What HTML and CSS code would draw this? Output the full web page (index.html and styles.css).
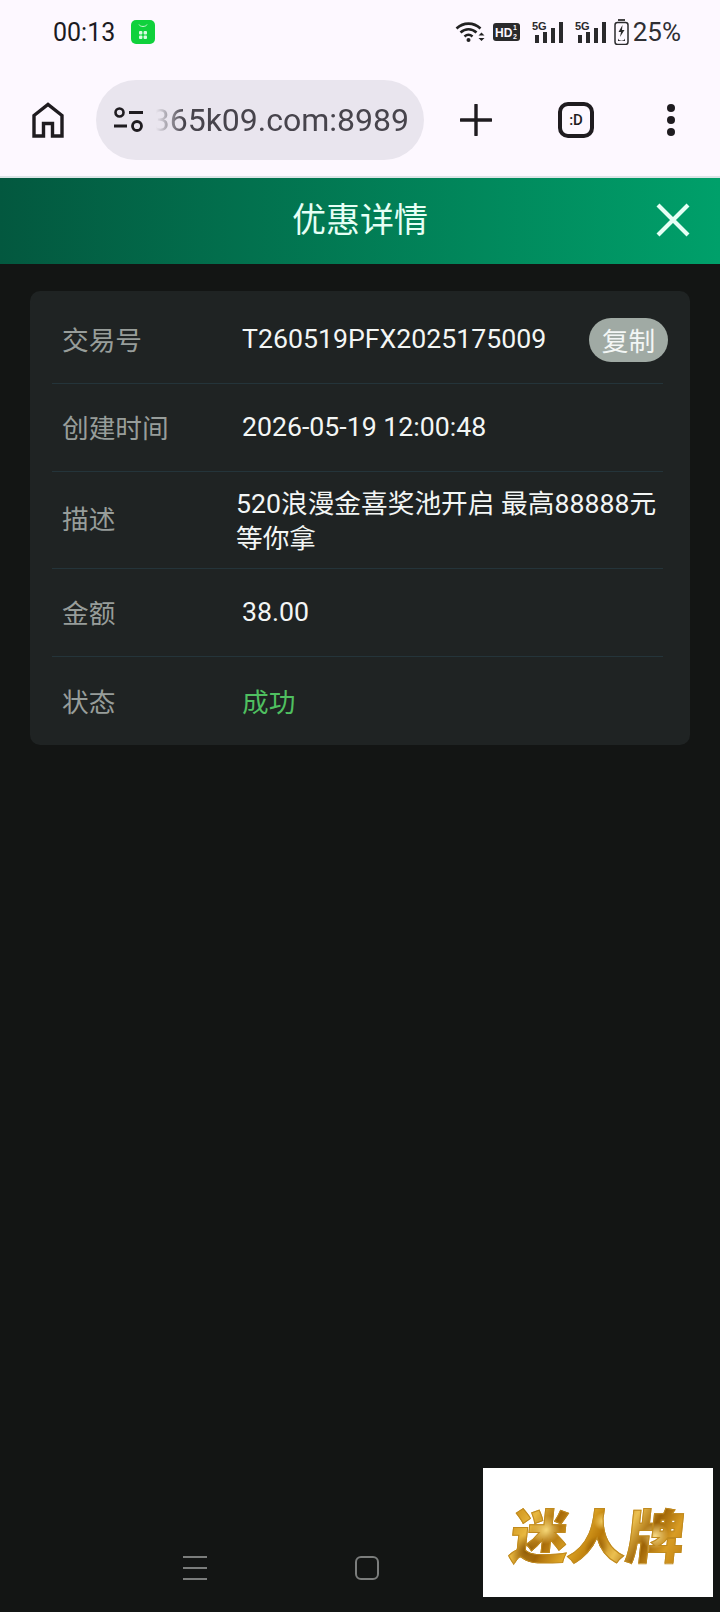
FILE: index.html
```html
<!DOCTYPE html>
<html lang="zh-CN">
<head>
  <meta charset="UTF-8" />
  <title>优惠详情</title>
  <link rel="stylesheet" href="styles.css">
</head>
<body>
  <div class="page">
    <div class="statusbar">
      <div class="status-left">
        <span class="clock">00:13</span>
        <svg class="app-icon" width="24" height="24" viewBox="0 0 24 24">
          <rect width="24" height="24" rx="5" fill="#10d13c"/>
          <path d="M8 4.500c1 2.600 7 2.600 8 0" fill="none" stroke="#c9f7d2" stroke-width="1"/>
          <rect x="8" y="11" width="3.400" height="3.400" rx="1" fill="#d9fbe0"/>
          <rect x="12.600" y="11" width="3.400" height="3.400" rx="1" fill="#d9fbe0"/>
          <rect x="8" y="15.600" width="3.400" height="3.400" rx="1" fill="#d9fbe0"/>
          <rect x="12.600" y="15.600" width="3.400" height="3.400" rx="1" fill="#d9fbe0"/>
        </svg>
      </div>
      <div class="status-right">
        <svg class="wifi" width="30" height="24" viewBox="0 0 30 24">
          <path d="M1.500 8.500c7-6.500 17-6.500 24 0M5.500 12.500c4.800-4.300 11.200-4.300 16 0M9.500 16.500c2.500-2.200 5.500-2.200 8 0" fill="none" stroke="#222" stroke-width="2.600"/>
          <circle cx="13.500" cy="20" r="2" fill="#222"/>
          <path d="M23.500 15.500h6l-3-3zM23.500 18h6l-3 3z" fill="#222"/>
        </svg>
        <svg width="28" height="20" viewBox="0 0 28 20">
          <rect width="27" height="18" y="1" rx="3" fill="#2a2a2c"/>
          <text class="hd-text" x="2" y="15">HD</text>
          <text class="hd-frac" x="20" y="8">1</text>
          <text class="hd-frac" x="20" y="17">2</text>
        </svg>
        <svg class="sim" width="32" height="24" viewBox="0 0 32 24">
          <text class="sim-text" x="0" y="10">5G</text>
          <rect x="3" y="15" width="4" height="8" fill="#2a2a2c"/>
          <rect x="11" y="12" width="4" height="11" fill="#2a2a2c"/>
          <rect x="19" y="8" width="4" height="15" fill="#2a2a2c"/>
          <rect x="27" y="2" width="4" height="21" fill="#2a2a2c"/>
        </svg>
        <svg class="sim" width="32" height="24" viewBox="0 0 32 24">
          <text class="sim-text" x="0" y="10">5G</text>
          <rect x="3" y="15" width="4" height="8" fill="#2a2a2c"/>
          <rect x="11" y="12" width="4" height="11" fill="#2a2a2c"/>
          <rect x="19" y="8" width="4" height="15" fill="#2a2a2c"/>
          <rect x="27" y="2" width="4" height="21" fill="#2a2a2c"/>
        </svg>
        <svg class="battery" width="15" height="26" viewBox="0 0 15 26">
          <rect x="4" y="0" width="7" height="2" fill="#444"/>
          <rect x="1" y="3.500" width="13" height="22" rx="2.500" fill="none" stroke="#2a2a2c" stroke-width="1.500"/>
          <path d="M8.500 6l-4 7h2.500l-1 5 4.500-7H8z" fill="#2a2a2c"/>
          <path d="M4 19.500c1 3 6 3 7 0v2.500H4z" fill="#2a2a2c"/>
        </svg>
        <span class="battery-text">25%</span>
      </div>
    </div>

    <div class="toolbar">
      <svg class="home-icon" width="32" height="36" viewBox="0 0 32 36">
        <path d="M2 34V13.500L16 2.500l14 11V34H20.500V21.500h-9V34z" fill="none" stroke="#1f1c20" stroke-width="3.400"/>
      </svg>
      <div class="urlbar">
        <svg width="32" height="26" viewBox="0 0 32 26">
          <circle cx="6.500" cy="5.500" r="4" fill="none" stroke="#1f1c20" stroke-width="2.600"/>
          <path d="M16 5.500h14M1 19h13" stroke="#1f1c20" stroke-width="2.800"/>
          <circle cx="24" cy="19" r="4.500" fill="none" stroke="#1f1c20" stroke-width="2.800"/>
        </svg>
        <div class="url-clip"><span class="url-text">365k09.com:8989</span></div>
      </div>
      <svg class="plus-icon" width="32" height="32" viewBox="0 0 32 32">
        <path d="M16 1v30M1 16h30" stroke="#1f1c20" stroke-width="3.400" stroke-linecap="round"/>
      </svg>
      <div class="tab-count">:D</div>
      <div class="menu-dots"><i></i><i></i><i></i></div>
    </div>

    <div class="topbar">
      <h1 class="topbar-title">优惠详情</h1>
      <svg class="close-icon" width="34" height="34" viewBox="0 0 34 34">
        <path d="M2 2l30 30M32 2L2 32" stroke="#e6fff5" stroke-width="4.200"/>
      </svg>
    </div>

    <div class="content">
      <div class="card">
        <div class="row">
          <span class="label">交易号</span>
          <span class="value">T260519PFX2025175009</span>
          <button class="copy-btn">复制</button>
        </div>
        <div class="row">
          <span class="label">创建时间</span>
          <span class="value">2026-05-19 12:00:48</span>
        </div>
        <div class="row row-tall">
          <span class="label">描述</span>
          <span class="value value-desc">520浪漫金喜奖池开启 最高88888元等你拿</span>
        </div>
        <div class="row">
          <span class="label">金额</span>
          <span class="value">38.00</span>
        </div>
        <div class="row">
          <span class="label">状态</span>
          <span class="value success">成功</span>
        </div>
      </div>
    </div>

    <div class="navbar">
      <div class="nav-menu"><i></i><i></i><i></i></div>
      <div class="nav-home"></div>
    </div>

    <div class="logo-box"><span class="logo-text">迷人牌</span></div>
  </div>
</body>
</html>
```

FILE: styles.css
```css
* {
  box-sizing: border-box;
}

body {
  margin: 0;
  background: #131514;
  font-family: Roboto, "Noto Sans CJK SC", sans-serif;
}

.page {
  position: relative;
  width: 720px;
  height: 1612px;
  display: flex;
  flex-direction: column;
  overflow: hidden;
}

/* status bar */
.statusbar {
  height: 64px;
  padding: 0 39px 0 53px;
  background: #fdf8ff;
  display: flex;
  justify-content: space-between;
  align-items: center;
}

.status-left {
  display: flex;
  align-items: center;
  gap: 16px;
}

.clock {
  font-size: 25px;
  color: #1c1b1f;
}

.app-icon {
  display: block;
}

.status-right {
  display: flex;
  align-items: center;
  gap: 10px;
  color: #2a2a2c;
}

.wifi {
  margin-right: -2px;
}

.sim {
  margin-left: 1px;
}

.battery {
  margin-left: -3px;
  margin-right: -6px;
}

.battery-text {
  font-size: 26px;
  color: #2f2f33;
}

.hd-text {
  font: bold 12px "Liberation Sans", sans-serif;
  fill: #fdf8ff;
}

.hd-frac {
  font: bold 7px "Liberation Sans", sans-serif;
  fill: #fdf8ff;
}

.sim-text {
  font: bold 11px "Liberation Sans", sans-serif;
  fill: #2a2a2c;
}

/* browser toolbar */
.toolbar {
  height: 114px;
  padding: 18px 0 18px 32px;
  background: #fdf8ff;
  border-bottom: 2px solid #dbe4e6;
  display: flex;
  align-items: center;
}

.home-icon {
  flex: none;
}

.urlbar {
  width: 328px;
  height: 80px;
  margin-left: 32px;
  padding: 0 15px 0 17px;
  background: #e9e5ee;
  border-radius: 40px;
  display: flex;
  align-items: center;
  gap: 11px;
}

.urlbar svg {
  flex: none;
}

.url-clip {
  flex: 1;
  min-width: 0;
  overflow: hidden;
  display: flex;
  justify-content: flex-end;
  white-space: nowrap;
  -webkit-mask-image: linear-gradient(90deg, transparent 0, #000 28px);
  mask-image: linear-gradient(90deg, transparent 0, #000 28px);
}

.url-text {
  flex: none;
  font-size: 32px;
  color: #47444c;
}

.plus-icon {
  flex: none;
  margin-left: 36px;
}

.tab-count {
  width: 36px;
  height: 36px;
  margin-left: 66px;
  border: 4px solid #1f1c20;
  border-radius: 10px;
  font-size: 15px;
  font-weight: 500;
  color: #1f1c20;
  display: flex;
  align-items: center;
  justify-content: center;
}

.menu-dots {
  margin-left: 73px;
  display: flex;
  flex-direction: column;
  gap: 4px;
}

.menu-dots i {
  display: block;
  width: 8px;
  height: 8px;
  border-radius: 50%;
  background: #1f1c20;
}

/* green header */
.topbar {
  position: relative;
  height: 86px;
  padding-bottom: 8px;
  background: linear-gradient(90deg, #03583f, #00a06a);
  display: flex;
  align-items: center;
  justify-content: center;
}

.topbar-title {
  margin: 0;
  font-size: 34px;
  font-weight: 400;
  color: #e6fff5;
}

.close-icon {
  position: absolute;
  right: 30px;
  top: 25px;
}

/* detail card */
.content {
  flex: 1;
  padding: 27px 30px 0;
}

.card {
  padding: 5px 27px 0 22px;
  background: #1f2323;
  border-radius: 10px;
}

.row {
  height: 88px;
  padding-left: 10px;
  padding-bottom: 2px;
  border-bottom: 1px solid #24343a;
  display: flex;
  align-items: center;
  font-size: 26.7px;
}

.row-tall {
  height: 97px;
  padding-bottom: 6px;
}

.row:last-child {
  border-bottom: 0;
}

.label {
  flex: none;
  width: 180px;
  color: #979d9a;
}

.value {
  flex: 1;
  color: #f3f6f5;
}

.value-desc {
  margin-left: -6px;
  padding-top: 10px;
  line-height: 35px;
  word-break: break-all;
}

.success {
  color: #4fc060;
}

.copy-btn {
  flex: none;
  width: 79px;
  height: 44px;
  margin-top: 2px;
  margin-right: -5px;
  padding: 0;
  border: none;
  border-radius: 22px;
  background: #a0aaa4;
  color: #f3f6f5;
  font: inherit;
}

/* system navigation */
.navbar {
  height: 110px;
  padding: 54px 0 0 183px;
  display: flex;
  align-items: flex-start;
  gap: 148px;
}

.nav-menu {
  width: 24px;
  height: 24px;
  display: flex;
  flex-direction: column;
  justify-content: space-between;
}

.nav-menu i {
  display: block;
  height: 2px;
  background: #7b7d7c;
}

.nav-home {
  width: 24px;
  height: 24px;
  border: 2px solid #7b7d7c;
  border-radius: 6px;
}

/* floating ad */
.logo-box {
  position: absolute;
  left: 483px;
  top: 1468px;
  width: 230px;
  height: 129px;
  background: #fff;
  display: flex;
  align-items: center;
  justify-content: center;
}

.logo-text {
  display: block;
  font-family: "Noto Sans CJK SC", sans-serif;
  font-size: 58px;
  line-height: 60px;
  font-weight: 900;
  transform: skewX(-6deg);
  -webkit-text-stroke: 1px #c08a1e;
  background:
    radial-gradient(circle at 20% 45%, #f6d878 0, transparent 10%),
    radial-gradient(circle at 52% 30%, #f4d068 0, transparent 9%),
    radial-gradient(circle at 50% 75%, #8a5404 0, transparent 12%),
    radial-gradient(circle at 83% 55%, #f8dc88 0, transparent 9%),
    radial-gradient(circle at 10% 80%, #8f5a06 0, transparent 10%),
    linear-gradient(115deg, #c98a12 0, #e8b840 14%, #a86a08 26%, #e0a828 40%, #b87808 52%, #ecc050 64%, #9c6206 76%, #d89c24 88%, #c08010 100%);
  -webkit-background-clip: text;
  background-clip: text;
  color: transparent;
}
```
